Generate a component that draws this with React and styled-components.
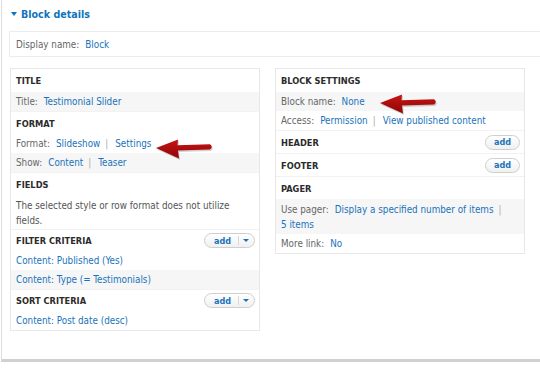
import React from 'react';
import styled, { createGlobalStyle } from 'styled-components';

const GlobalStyle = createGlobalStyle`
    html, body {
        margin: 0;
        padding: 0;
        width: 540px;
        height: 382px;
        overflow: hidden;
        background: #fff;
    }
    body {
        font-family: "DejaVu Sans Condensed", "Liberation Sans", sans-serif;
        font-size: 9.8px;
        color: #333;
    }
`;

const Frame = styled.div`
    position: relative;
    margin-left: 1px;
    height: 352px;
    padding: 7px 0 0 7px;
    border-left: 1px solid #dedede;
    border-bottom: 3px solid #d0d0d0;
`;

const Heading = styled.div`
    display: flex;
    align-items: center;
    height: 14px;
    color: #0f74bd;
    font-weight: bold;
    font-size: 10.6px;
`;

const Caret = styled.span`
    width: 0;
    height: 0;
    margin: 0 4px 0 2px;
    border-left: 3px solid transparent;
    border-right: 3px solid transparent;
    border-top: 4px solid #0f74bd;
`;

const NameBox = styled.div`
    display: flex;
    align-items: center;
    height: 24px;
    margin-top: 10px;
    padding-left: 6px;
    border: 1px solid #ececec;
    border-right: none;
`;

const Columns = styled.div`
    display: flex;
    align-items: flex-start;
    gap: 15px;
    margin-top: 11px;
    padding-left: 1px;
`;

const Panel = styled.div`
    width: 248px;
    border: 1px solid #e8e8e8;
`;

const SectionHead = styled.div`
    display: flex;
    align-items: center;
    justify-content: space-between;
    box-sizing: border-box;
    height: ${(props) => (props.$short ? 22 : 23)}px;
    padding: 0 4px 0 5px;
    border-top: ${(props) => (props.$first ? 'none' : '1px solid #f2f2f2')};
    font-weight: bold;
    font-size: 9.2px;
    color: #2b2b2b;
`;

const Row = styled.div`
    display: flex;
    flex-wrap: wrap;
    align-items: center;
    min-height: 19px;
    box-sizing: border-box;
    padding: ${(props) => (props.$tall ? '2.5px 5px' : '0 5px')};
    line-height: 15px;
    background: ${(props) => (props.$alt ? '#f6f6f6' : '#fff')};
`;

const Note = styled.div`
    box-sizing: border-box;
    height: 34px;
    padding: 3px 5px 0;
    line-height: 15px;
    color: #555;
`;

const Label = styled.span`
    color: #666;
    margin-right: 6px;
`;

const Link = styled.a`
    color: #1a73bb;
    text-decoration: none;
    white-space: nowrap;
`;

const Pipe = styled.span`
    color: #aaa;
    margin: 0 7px 0 5px;
`;

const AddButton = styled.span`
    display: inline-flex;
    align-items: center;
    box-sizing: border-box;
    height: 15px;
    padding: ${(props) => (props.$menu ? '0 5px 0 9px' : '0 8px')};
    border: 1px solid #cfcfcf;
    border-radius: 8px;
    background: linear-gradient(#ffffff, #f0f0f0);
    color: #1a73bb;
    font-size: 9px;
    font-weight: 600;
`;

const MenuDivider = styled.span`
    width: 1px;
    height: 9px;
    margin: 0 4px 0 7px;
    background: #d8d8d8;
`;

const MenuCaret = styled.span`
    width: 0;
    height: 0;
    border-left: 3px solid transparent;
    border-right: 3px solid transparent;
    border-top: 3px solid #1a73bb;
`;

const ArrowMark = styled.svg`
    position: absolute;
    left: ${(props) => props.$x}px;
    top: ${(props) => props.$y}px;
    overflow: visible;
`;

function Arrow({ x, y, id }) {
    return (
        <ArrowMark $x={x} $y={y} width="60" height="22" viewBox="0 0 60 22">
            <defs>
                <linearGradient id={id} x1="0" y1="0" x2="0" y2="1">
                    <stop offset="0" stopColor="#c81414" />
                    <stop offset="1" stopColor="#8e0606" />
                </linearGradient>
            </defs>
            <path
                d="M1 10 L23 1.5 L22.5 7.2 L55 6.2 Q58.5 8.8 55 11.4 L23 12.6 L24 20.5 Z"
                fill="#000"
                opacity="0.18"
                transform="translate(1 1.5)"
            />
            <path
                d="M1 10 L23 1.5 L22.5 7.2 L55 6.2 Q58.5 8.8 55 11.4 L23 12.6 L24 20.5 Z"
                fill={`url(#${id})`}
            />
        </ArrowMark>
    );
}

function Add({ menu }) {
    return (
        <AddButton $menu={menu}>
            add
            {menu && <MenuDivider />}
            {menu && <MenuCaret />}
        </AddButton>
    );
}

export default function App() {
    return (
        <>
            <GlobalStyle />
            <Frame>
                <Heading>
                    <Caret />
                    Block details
                </Heading>
                <NameBox>
                    <Label>Display name:</Label>
                    <Link>Block</Link>
                </NameBox>
                <Columns>
                    <Panel>
                        <SectionHead $first>TITLE</SectionHead>
                        <Row $alt>
                            <Label>Title:</Label>
                            <Link>Testimonial Slider</Link>
                        </Row>
                        <SectionHead>FORMAT</SectionHead>
                        <Row>
                            <Label>Format:</Label>
                            <Link>Slideshow</Link>
                            <Pipe>|</Pipe>
                            <Link>Settings</Link>
                        </Row>
                        <Row $alt>
                            <Label>Show:</Label>
                            <Link>Content</Link>
                            <Pipe>|</Pipe>
                            <Link>Teaser</Link>
                        </Row>
                        <SectionHead>FIELDS</SectionHead>
                        <Note>The selected style or row format does not utilize fields.</Note>
                        <SectionHead $short>
                            FILTER CRITERIA
                            <Add menu />
                        </SectionHead>
                        <Row>
                            <Link>Content: Published (Yes)</Link>
                        </Row>
                        <Row $alt>
                            <Link>Content: Type (= Testimonials)</Link>
                        </Row>
                        <SectionHead $short>
                            SORT CRITERIA
                            <Add menu />
                        </SectionHead>
                        <Row>
                            <Link>Content: Post date (desc)</Link>
                        </Row>
                    </Panel>
                    <Panel>
                        <SectionHead $first>BLOCK SETTINGS</SectionHead>
                        <Row $alt>
                            <Label>Block name:</Label>
                            <Link>None</Link>
                        </Row>
                        <Row>
                            <Label>Access:</Label>
                            <Link>Permission</Link>
                            <Pipe>|</Pipe>
                            <Link>View published content</Link>
                        </Row>
                        <SectionHead>
                            HEADER
                            <Add />
                        </SectionHead>
                        <SectionHead>
                            FOOTER
                            <Add />
                        </SectionHead>
                        <SectionHead>PAGER</SectionHead>
                        <Row $alt $tall>
                            <Label>Use pager:</Label>
                            <Link>Display a specified number of items</Link>
                            <Pipe>|</Pipe>
                            <Link>5 items</Link>
                        </Row>
                        <Row>
                            <Label>More link:</Label>
                            <Link>No</Link>
                        </Row>
                    </Panel>
                </Columns>
                <Arrow x={153} y={138} id="arrow-a" />
                <Arrow x={377} y={93} id="arrow-b" />
            </Frame>
        </>
    );
}
